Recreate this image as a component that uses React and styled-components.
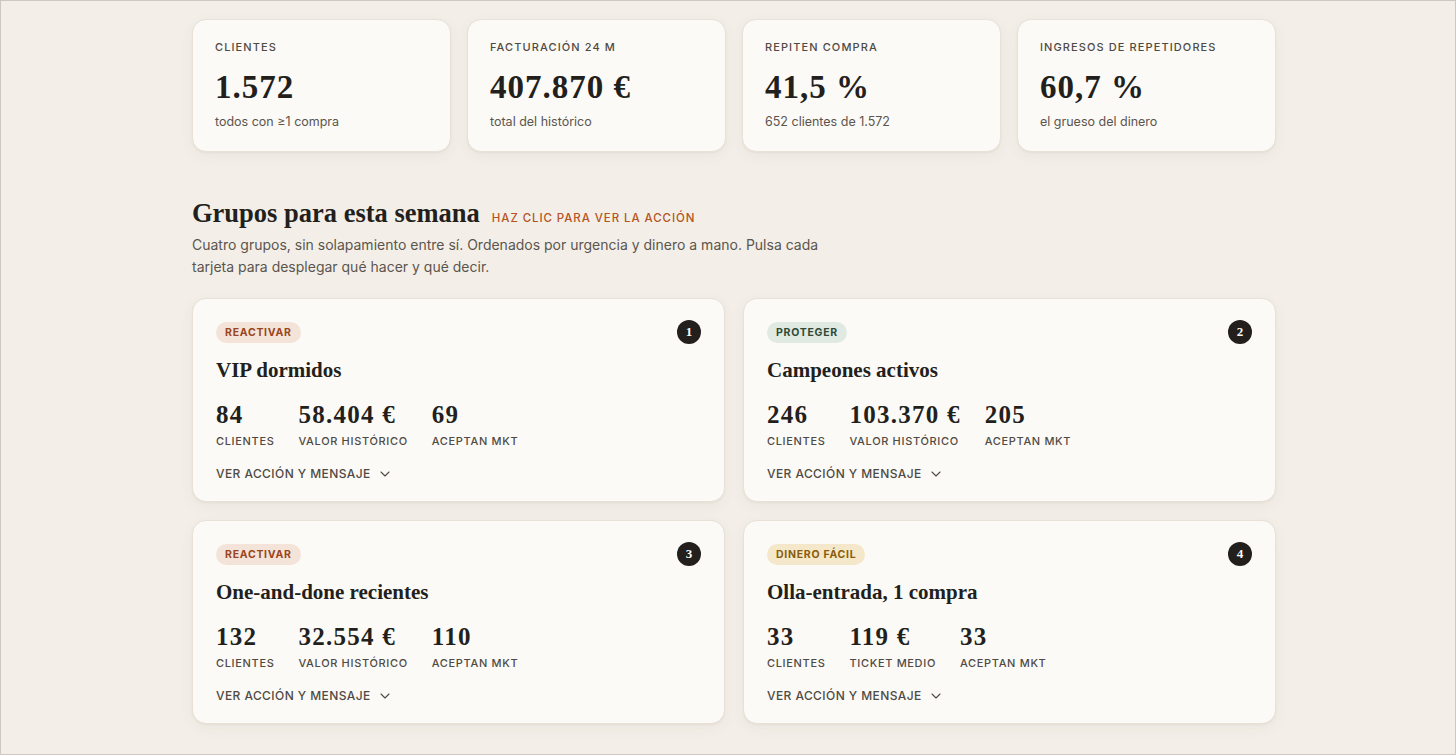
import React from "react";
import styled, { createGlobalStyle } from "styled-components";
import { ChevronDown } from "lucide-react";

const GlobalStyle = createGlobalStyle`
  html, body {
    margin: 0;
    padding: 0;
    background: #f3efe8;
  }
  body {
    font-family: Inter, "Noto Sans", sans-serif;
    color: #221f1c;
  }
  * {
    box-sizing: border-box;
  }
`;

const serif = `"Liberation Serif", "Times New Roman", serif`;

const Frame = styled.div`
  min-height: 100vh;
  border: 1px solid #cdc8c0;
  background: #f3efe8;
  padding: 18px 0 30px 12px;
`;

const Main = styled.main`
  max-width: 1084px;
  margin: 0 auto;
`;

const KpiRow = styled.section`
  display: grid;
  grid-template-columns: repeat(4, 1fr);
  gap: 16px;
`;

const Card = styled.div`
  background: #fcfaf6;
  border: 1px solid #e7e1d7;
  border-radius: 14px;
  box-shadow: 0 1px 2px rgba(70, 50, 30, 0.05), 0 4px 14px rgba(70, 50, 30, 0.05);
`;

const KpiCard = styled(Card)`
  padding: 20px 22px 20px;
  height: 133px;
`;

const KpiLabel = styled.div`
  font-size: 11px;
  line-height: 14px;
  font-weight: 500;
  letter-spacing: 0.1em;
  text-transform: uppercase;
  color: #4f4a44;
`;

const KpiValue = styled.div`
  margin-top: 16px;
  font-family: ${serif};
  font-weight: 700;
  font-size: 33px;
  line-height: 35px;
  letter-spacing: 0.03em;
  color: #221f1c;
`;

const KpiNote = styled.div`
  margin-top: 9px;
  font-size: 12.5px;
  line-height: 16px;
  color: #5b554e;
`;

const SectionHead = styled.div`
  margin-top: 46px;
  display: flex;
  align-items: baseline;
  gap: 12px;
`;

const SectionTitle = styled.h2`
  margin: 0;
  font-family: ${serif};
  font-weight: 700;
  font-size: 26.5px;
  line-height: 31px;
  color: #221f1c;
`;

const Hint = styled.span`
  font-size: 11.5px;
  font-weight: 500;
  letter-spacing: 0.08em;
  text-transform: uppercase;
  color: #b5541f;
`;

const Lead = styled.p`
  margin: 5px 0 0;
  max-width: 640px;
  font-size: 14px;
  line-height: 22px;
  color: #5b554e;
`;

const GroupGrid = styled.section`
  margin-top: 20px;
  display: grid;
  grid-template-columns: 1fr 1fr;
  gap: 18px 18px;
`;

const GroupCard = styled(Card)`
  padding: 21px 23px 19px 23px;
  cursor: pointer;
`;

const GroupTop = styled.div`
  display: flex;
  align-items: center;
  justify-content: space-between;
`;

const tones = {
  red: { bg: "#f4e3d9", fg: "#9a4520" },
  green: { bg: "#e0eae2", fg: "#2f4a38" },
  gold: { bg: "#f5e7c9", fg: "#8a5d0c" },
};

const Tag = styled.span`
  display: inline-flex;
  align-items: center;
  height: 21px;
  padding: 0 9px;
  border-radius: 999px;
  font-size: 10.5px;
  font-weight: 700;
  letter-spacing: 0.07em;
  text-transform: uppercase;
  background: ${(p) => tones[p.$tone].bg};
  color: ${(p) => tones[p.$tone].fg};
`;

const Rank = styled.span`
  width: 24px;
  height: 24px;
  border-radius: 50%;
  background: #221f1c;
  color: #fcfaf6;
  display: flex;
  align-items: center;
  justify-content: center;
  font-family: ${serif};
  font-weight: 700;
  font-size: 13px;
`;

const GroupName = styled.h3`
  margin: 13px 0 0;
  font-family: ${serif};
  font-weight: 700;
  font-size: 21px;
  line-height: 26px;
  color: #221f1c;
`;

const Stats = styled.div`
  margin-top: 18px;
  display: flex;
  gap: 24px;
`;

const Stat = styled.div`
  display: flex;
  flex-direction: column;
`;

const StatValue = styled.div`
  font-family: ${serif};
  font-weight: 700;
  font-size: 25px;
  line-height: 28px;
  letter-spacing: 0.05em;
  color: #221f1c;
`;

const StatLabel = styled.div`
  margin-top: 5px;
  font-size: 11px;
  line-height: 14px;
  font-weight: 500;
  letter-spacing: 0.06em;
  text-transform: uppercase;
  color: #4f4a44;
`;

const Toggle = styled.button`
  margin-top: 18px;
  padding: 0;
  border: 0;
  background: none;
  display: inline-flex;
  align-items: center;
  gap: 6px;
  font-family: Inter, sans-serif;
  font-size: 12px;
  line-height: 16px;
  font-weight: 500;
  letter-spacing: 0.035em;
  text-transform: uppercase;
  color: #4f4a44;
  cursor: pointer;
`;

const kpis = [
  { label: "Clientes", value: "1.572", note: "todos con ≥1 compra" },
  { label: "Facturación 24 m", value: "407.870 €", note: "total del histórico" },
  { label: "Repiten compra", value: "41,5 %", note: "652 clientes de 1.572" },
  { label: "Ingresos de repetidores", value: "60,7 %", note: "el grueso del dinero" },
];

const groups = [
  {
    tag: "Reactivar",
    tone: "red",
    name: "VIP dormidos",
    stats: [
      ["84", "Clientes"],
      ["58.404 €", "Valor histórico"],
      ["69", "Aceptan MKT"],
    ],
  },
  {
    tag: "Proteger",
    tone: "green",
    name: "Campeones activos",
    stats: [
      ["246", "Clientes"],
      ["103.370 €", "Valor histórico"],
      ["205", "Aceptan MKT"],
    ],
  },
  {
    tag: "Reactivar",
    tone: "red",
    name: "One-and-done recientes",
    stats: [
      ["132", "Clientes"],
      ["32.554 €", "Valor histórico"],
      ["110", "Aceptan MKT"],
    ],
  },
  {
    tag: "Dinero fácil",
    tone: "gold",
    name: "Olla-entrada, 1 compra",
    stats: [
      ["33", "Clientes"],
      ["119 €", "Ticket medio"],
      ["33", "Aceptan MKT"],
    ],
  },
];

export default function App() {
  return (
    <Frame>
      <GlobalStyle />
      <Main>
        <KpiRow>
          {kpis.map((k) => (
            <KpiCard key={k.label}>
              <KpiLabel>{k.label}</KpiLabel>
              <KpiValue>{k.value}</KpiValue>
              <KpiNote>{k.note}</KpiNote>
            </KpiCard>
          ))}
        </KpiRow>

        <SectionHead>
          <SectionTitle>Grupos para esta semana</SectionTitle>
          <Hint>Haz clic para ver la acción</Hint>
        </SectionHead>
        <Lead>
          Cuatro grupos, sin solapamiento entre sí. Ordenados por urgencia y dinero a mano. Pulsa cada
          tarjeta para desplegar qué hacer y qué decir.
        </Lead>

        <GroupGrid>
          {groups.map((g, i) => (
            <GroupCard key={g.name}>
              <GroupTop>
                <Tag $tone={g.tone}>{g.tag}</Tag>
                <Rank>{i + 1}</Rank>
              </GroupTop>
              <GroupName>{g.name}</GroupName>
              <Stats>
                {g.stats.map(([v, l]) => (
                  <Stat key={l}>
                    <StatValue>{v}</StatValue>
                    <StatLabel>{l}</StatLabel>
                  </Stat>
                ))}
              </Stats>
              <Toggle>
                Ver acción y mensaje
                <ChevronDown size={16} strokeWidth={1.6} />
              </Toggle>
            </GroupCard>
          ))}
        </GroupGrid>
      </Main>
    </Frame>
  );
}
